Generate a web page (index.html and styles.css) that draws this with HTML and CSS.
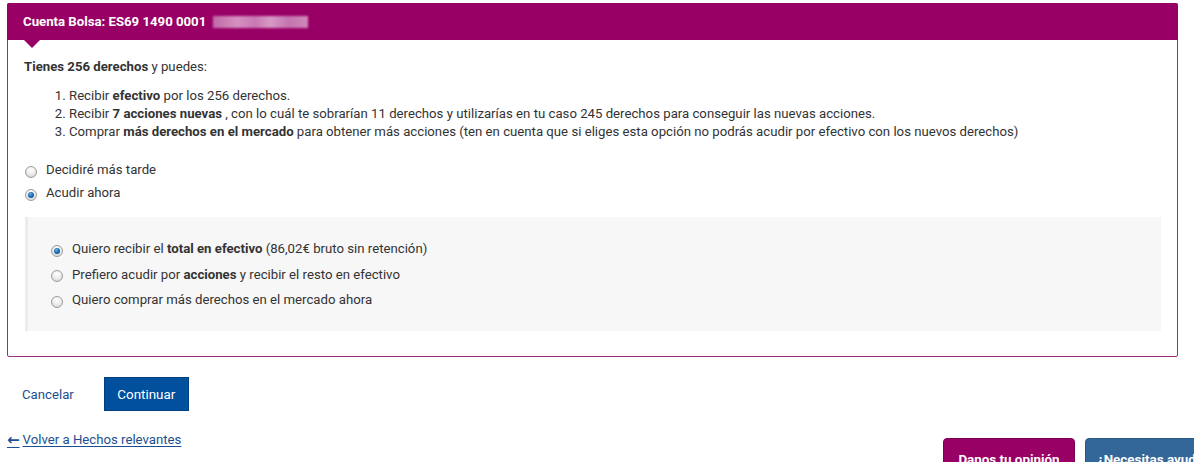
FILE: index.html
```html
<!DOCTYPE html>
<html lang="es">
<head>
<meta charset="utf-8">
<title>Cuenta Bolsa</title>
<link rel="stylesheet" href="styles.css">
</head>
<body>
<div class="page">
  <section class="card">
    <header class="card-head">
      <span class="card-title">Cuenta Bolsa: ES69 1490 0001</span>
      <span class="redacted"></span>
    </header>
    <div class="card-body">
      <p class="intro"><b>Tienes 256 derechos</b> y puedes:</p>
      <ol class="options-list">
        <li>Recibir <b>efectivo</b> por los 256 derechos.</li>
        <li>Recibir <b>7 acciones nuevas</b> , con lo cuál te sobrarían 11 derechos y utilizarías en tu caso 245 derechos para conseguir las nuevas acciones.</li>
        <li>Comprar <b>más derechos en el mercado</b> para obtener más acciones (ten en cuenta que si eliges esta opción no podrás acudir por efectivo con los nuevos derechos)</li>
      </ol>
      <div class="radio-group">
        <label class="radio-row"><span class="radio"></span><span>Decidiré más tarde</span></label>
        <label class="radio-row"><span class="radio checked"></span><span>Acudir ahora</span></label>
      </div>
      <div class="sub-box">
        <label class="radio-row"><span class="radio checked"></span><span>Quiero recibir el <b>total en efectivo</b> (86,02€ bruto sin retención)</span></label>
        <label class="radio-row"><span class="radio"></span><span>Prefiero acudir por <b>acciones</b> y recibir el resto en efectivo</span></label>
        <label class="radio-row"><span class="radio"></span><span>Quiero comprar más derechos en el mercado ahora</span></label>
      </div>
    </div>
  </section>

  <div class="actions">
    <a class="btn-link" href="#">Cancelar</a>
    <button class="btn-primary" type="button">Continuar</button>
  </div>

  <a class="back-link" href="#"><span class="arrow">&#8592;</span> Volver a Hechos relevantes</a>
</div>

<div class="floating">
  <button class="tab tab-opinion" type="button">Danos tu opinión</button>
  <button class="tab tab-help" type="button">¿Necesitas ayuda?</button>
</div>
</body>
</html>
```

FILE: styles.css
```css
* { box-sizing: border-box; }

html, body {
  margin: 0;
  padding: 0;
  background: #ffffff;
}

body {
  font-family: Roboto, "Liberation Sans", Arial, sans-serif;
  font-size: 13.2px;
  color: #333333;
}

.page {
  padding: 3px 16px 0 7px;
}

.card {
  border: 1px solid #9b2c7c;
  border-radius: 2px;
  background: #fff;
}

.card-head {
  position: relative;
  height: 37px;
  background: #990066;
  display: flex;
  align-items: center;
  padding: 0 16px;
  margin: -1px -1px 0 -1px;
  border-radius: 2px 2px 0 0;
}

.card-head::after {
  content: "";
  position: absolute;
  left: 17px;
  bottom: -8px;
  border-left: 8px solid transparent;
  border-right: 8px solid transparent;
  border-top: 8px solid #990066;
}

.card-title {
  color: #fff;
  font-weight: 700;
  font-size: 13.2px;
}

.redacted {
  display: inline-block;
  width: 95px;
  height: 12px;
  margin-left: 7px;
  background: linear-gradient(90deg, #c06aa8 0%, #d58fc0 25%, #c878b3 45%, #d89ac6 60%, #c374b0 80%, #d08ab9 100%);
  filter: blur(1px);
}

.card-body {
  padding: 18px 16px 25px 16px;
}

.intro {
  margin: 0 0 11px 0;
  line-height: 18px;
}

.options-list {
  margin: 0;
  padding-left: 45px;
  line-height: 18px;
}

.options-list b, .intro b, .sub-box b { font-weight: 700; }

.radio-group {
  margin-top: 20px;
  display: flex;
  flex-direction: column;
  gap: 5px;
}

.radio-row {
  display: flex;
  align-items: center;
  line-height: 18px;
}

.radio-group .radio-row { padding-left: 1px; }

.radio {
  width: 12px;
  height: 12px;
  border-radius: 50%;
  border: 1px solid #9c9c9c;
  background: radial-gradient(circle at 50% 30%, #ffffff 0%, #ececec 50%, #cfcfcf 100%);
  margin-right: 9px;
  margin-top: 3px;
  position: relative;
  flex: none;
}

.radio.checked::after {
  content: "";
  position: absolute;
  left: 2px;
  top: 2px;
  width: 6px;
  height: 6px;
  border-radius: 50%;
  background: radial-gradient(circle at 40% 35%, #6fb3e8 0%, #1f6fb3 45%, #0b3d6e 100%);
}

.sub-box {
  margin-top: 15px;
  margin-left: 1px;
  background: #f7f7f7;
  border-left: 3px solid #ececec;
  padding: 23px 20px 22px 23px;
  display: flex;
  flex-direction: column;
  gap: 7.5px;
}

.actions {
  display: flex;
  align-items: center;
  margin-top: 20px;
  padding-left: 15px;
}

.btn-link {
  color: #1c4f91;
  text-decoration: none;
  font-size: 13.2px;
}

.btn-primary {
  margin-left: 30px;
  width: 85px;
  height: 34px;
  background: #00509e;
  border: 1px solid #003f7f;
  color: #fff;
  font-family: Roboto, "Liberation Sans", Arial, sans-serif;
  font-size: 13.4px;
  padding: 0;
}

.back-link {
  display: inline-flex;
  align-items: center;
  margin-top: 21px;
  color: #1c4f91;
  font-size: 13.2px;
  text-decoration: underline;
  text-underline-offset: 2px;
}

.back-link .arrow {
  display: inline-block;
  font-family: "DejaVu Sans", sans-serif;
  font-size: 15px;
  font-weight: 700;
  text-decoration: none;
  margin-right: 3px;
  line-height: 14px;
}

.floating {
  position: fixed;
  left: 943px;
  top: 438px;
  display: flex;
  gap: 10px;
}

.tab {
  height: 34px;
  border: none;
  border-radius: 4px 4px 0 0;
  color: #fff;
  font-family: Roboto, "Liberation Sans", Arial, sans-serif;
  font-weight: 700;
  font-size: 13.4px;
  text-align: center;
  line-height: 18px;
  padding: 9px 0 0 0;
  display: block;
}

.tab-opinion {
  width: 132px;
  background: #990066;
  border: 1px solid #7a0052;
}

.tab-help {
  width: 150px;
  background: #336699;
  border: 1px solid #2a5783;
  text-align: left;
  padding-left: 11px;
}
```
